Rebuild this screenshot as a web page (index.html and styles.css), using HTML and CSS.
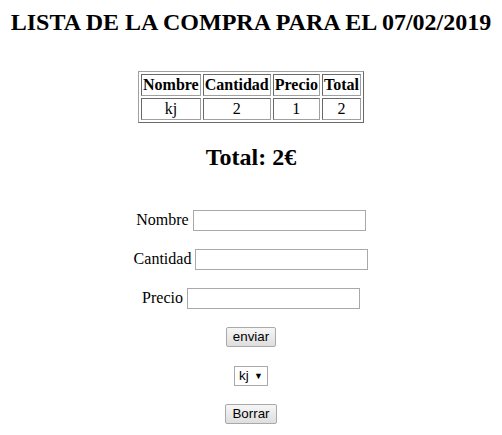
FILE: index.html
```html
<!DOCTYPE html>
<html lang="es">
<head>
<meta charset="utf-8">
<title>Lista de la compra</title>
<link rel="stylesheet" href="styles.css">
</head>
<body>
<h2 class="title">LISTA DE LA COMPRA PARA EL 07/02/2019</h2>
<table class="list">
  <tr><th>Nombre</th><th>Cantidad</th><th>Precio</th><th>Total</th></tr>
  <tr><td>kj</td><td>2</td><td>1</td><td>2</td></tr>
</table>
<h2 class="total">Total: 2€</h2>
<form class="form">
  <p class="row">Nombre <input class="field" type="text"></p>
  <p class="row">Cantidad <input class="field" type="text"></p>
  <p class="row">Precio <input class="field" type="text"></p>
  <p class="row row-ctl"><button class="btn" type="button">enviar</button></p>
  <p class="row row-ctl"><span class="select">kj <span class="arrow">▼</span></span></p>
  <p class="row row-ctl"><button class="btn" type="button">Borrar</button></p>
</form>
</body>
</html>
```
FILE: styles.css
```css
html, body {
  background: #fff;
}
body {
  margin: 8px;
  font-family: "Liberation Serif", "Times New Roman", serif;
  font-size: 16px;
  color: #000;
  text-align: center;
}
.title {
  font-size: 24px;
  font-weight: bold;
  margin: 0 0 35px;
  line-height: 28px;
}
.list {
  margin: 0 auto;
  border-collapse: separate;
  border-spacing: 2px;
  border: 1px solid;
  border-color: #a0a0a0 #696969 #696969 #a0a0a0;
}
.list th, .list td {
  border: 1px solid;
  border-color: #696969 #a0a0a0 #a0a0a0 #696969;
  padding: 1px;
  line-height: 18px;
}
.total {
  font-size: 24px;
  font-weight: bold;
  margin: 20px 0 37px;
  line-height: 28px;
}
.row {
  margin: 0 0 16px;
  line-height: 23px;
}
.row-ctl {
  line-height: 21px;
}
.field {
  box-sizing: border-box;
  width: 173px;
  height: 21px;
  border: 1px solid #a9a9a9;
  padding: 1px 2px;
  font: 13.33px "Liberation Sans", Arial, sans-serif;
  vertical-align: baseline;
}
.btn {
  font: 13.33px "Liberation Sans", Arial, sans-serif;
  padding: 1px 6px;
  height: 20px;
  line-height: 16px;
  background: linear-gradient(#f6f6f6, #dedede);
  border: 1px solid #a9a9a9;
  border-radius: 2px;
  color: #000;
  vertical-align: middle;
}
.select {
  display: inline-block;
  font: 13.33px "Liberation Sans", Arial, sans-serif;
  border: 1px solid #a9a9a9;
  padding: 0 4px;
  height: 18px;
  line-height: 18px;
  text-align: left;
  width: 24px;
  vertical-align: middle;
}
.arrow {
  font-size: 9px;
  float: right;
}
```
